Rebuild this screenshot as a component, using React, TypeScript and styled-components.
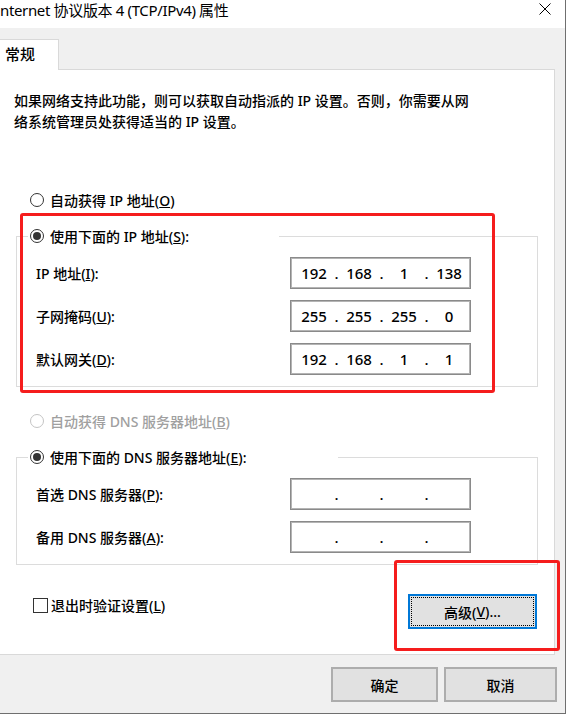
import styled, { createGlobalStyle } from "styled-components"

const GlobalStyle = createGlobalStyle`
	html, body {
		margin: 0;
		padding: 0;
		background: #ffffff;
		overflow: hidden;
	}
	* {
		box-sizing: border-box;
	}
	body {
		font-family: "Noto Sans", "Noto Sans CJK SC", sans-serif;
		color: #000;
	}
`

const ipRows = [
	{ label: "IP 地址", key: "I", value: ["192", "168", "1", "138"] },
	{ label: "子网掩码", key: "U", value: ["255", "255", "255", "0"] },
	{ label: "默认网关", key: "D", value: ["192", "168", "1", "1"] },
]

const dnsRows = [
	{ label: "首选 DNS 服务器", key: "P", value: ["", "", "", ""] },
	{ label: "备用 DNS 服务器", key: "A", value: ["", "", "", ""] },
]

const IpBox = ({ value }: { value: string[] }) => (
	<IpField>
		{value.map((oct, i) => (
			<span key={i} style={{ display: "contents" }}>
				{i > 0 && <Dot>.</Dot>}
				<Octet>{oct}</Octet>
			</span>
		))}
	</IpField>
)

const App = () => {
	return (
		<>
			<GlobalStyle />
			<Window>
				<TitleBar>
					<TitleText>nternet 协议版本 4 (TCP/IPv4) 属性</TitleText>
					<CloseIcon width="12" height="12" viewBox="0 0 12 12">
						<path d="M0.5 0.5 L11.5 11.5 M11.5 0.5 L0.5 11.5" stroke="#000" strokeWidth="1" fill="none" />
					</CloseIcon>
				</TitleBar>

				<Body>
					<TabStrip>
						<Tab>常规</Tab>
					</TabStrip>
					<Panel>
						<Desc>
							如果网络支持此功能，则可以获取自动指派的 IP 设置。否则，你需要从网<br />
							络系统管理员处获得适当的 IP 设置。
						</Desc>

						<OptionRow $top={58}>
							<Radio />
							<span>自动获得 IP 地址(<u>O</u>)</span>
						</OptionRow>

						<Group $top={16}>
							<Legend $width={251}>
								<Radio $checked />
								<span>使用下面的 IP 地址(<u>S</u>):</span>
							</Legend>
							{ipRows.map(r => (
								<FieldRow key={r.key}>
									<span>{r.label}(<u>{r.key}</u>):</span>
									<IpBox value={r.value} />
								</FieldRow>
							))}
						</Group>

						<OptionRow $top={24} $disabled>
							<Radio $disabled />
							<span>自动获得 DNS 服务器地址(<u>B</u>)</span>
						</OptionRow>

						<Group $top={16}>
							<Legend $width={310}>
								<Radio $checked />
								<span>使用下面的 DNS 服务器地址(<u>E</u>):</span>
							</Legend>
							{dnsRows.map(r => (
								<FieldRow key={r.key}>
									<span>{r.label}(<u>{r.key}</u>):</span>
									<IpBox value={r.value} />
								</FieldRow>
							))}
						</Group>

						<FooterRow>
							<CheckRow>
								<CheckBox />
								<span>退出时验证设置(<u>L</u>)</span>
							</CheckRow>
							<Button $focused $width={129}>高级(<u>V</u>)...</Button>
						</FooterRow>
					</Panel>

					<DialogButtons>
						<Button $width={107}>确定</Button>
						<Button $width={113}>取消</Button>
					</DialogButtons>
				</Body>

				<Marker style={{ left: 20, top: 213, width: 475, height: 180 }} />
				<Marker style={{ left: 394, top: 560, width: 166, height: 91 }} />
			</Window>
		</>
	)
}

const Window = styled.div`
	position: relative;
	width: 566px;
	height: 714px;
	background: #f0f0f0;
	border-right: 1px solid #6f6f6f;
	border-bottom: 1px solid #6f6f6f;
	display: flex;
	flex-direction: column;
	overflow: hidden;
	font-size: 14px;
	font-weight: 500;
`

const TitleBar = styled.div`
	height: 28px;
	flex: none;
	background: #ffffff;
	display: flex;
	align-items: flex-start;
	justify-content: space-between;
	padding-right: 14px;
`

const TitleText = styled.div`
	font-size: 15px;
	font-weight: 400;
	line-height: 20px;
	white-space: nowrap;
	letter-spacing: -0.35px;
`

const CloseIcon = styled.svg`
	margin-top: 3px;
`

const Body = styled.div`
	flex: 1;
	display: flex;
	flex-direction: column;
`

const TabStrip = styled.div`
	display: flex;
	margin-top: 11px;
	position: relative;
	z-index: 1;
`

const Tab = styled.div`
	width: 59px;
	height: 31px;
	margin-bottom: -1px;
	background: #ffffff;
	border: 1px solid #d9d9d9;
	border-left: none;
	border-bottom: none;
	padding-left: 5px;
	font-size: 15px;
	line-height: 28px;
`

const Panel = styled.div`
	width: 555px;
	height: 586px;
	flex: none;
	background: #ffffff;
	border: 1px solid #d9d9d9;
	border-left: none;
	display: flex;
	flex-direction: column;
`

const Desc = styled.p`
	margin: 20px 0 0 14px;
	line-height: 21px;
	font-size: 14px;
	white-space: nowrap;
`

const OptionRow = styled.div<{ $top: number; $disabled?: boolean }>`
	display: flex;
	align-items: center;
	gap: 6px;
	height: 20px;
	margin-top: ${p => p.$top}px;
	padding-left: 30px;
	color: ${p => (p.$disabled ? "#a0a0a0" : "#000")};
	white-space: nowrap;
`

const Radio = styled.span<{ $checked?: boolean; $disabled?: boolean }>`
	position: relative;
	width: 14px;
	height: 14px;
	flex: none;
	border-radius: 50%;
	border: 1px solid ${p => (p.$disabled ? "#c4c4c4" : "#333")};
	background: #fff;

	&::after {
		content: "";
		display: ${p => (p.$checked ? "block" : "none")};
		position: absolute;
		left: 2px;
		top: 2px;
		width: 8px;
		height: 8px;
		border-radius: 50%;
		background: #333;
	}
`

const Group = styled.fieldset<{ $top: number }>`
	margin: ${p => p.$top}px 0 0 16px;
	width: 522px;
	border: 1px solid #dcdcdc;
	padding: 11px 0 11px 19px;
	display: flex;
	flex-direction: column;
	gap: 11px;
	min-inline-size: 0;
`

const Legend = styled.legend<{ $width: number }>`
	display: flex;
	align-items: center;
	gap: 6px;
	height: 20px;
	width: ${p => p.$width}px;
	margin-left: -8px;
	padding: 0 0 0 2px;
	white-space: nowrap;
	background: #fff;
`

const FieldRow = styled.div`
	display: grid;
	grid-template-columns: 254px 181px;
	align-items: center;
	height: 32px;
	white-space: nowrap;
`

const IpField = styled.div`
	display: flex;
	align-items: center;
	height: 32px;
	border: 1px solid #8a8a8a;
	box-shadow: inset 0 0 0 1px #b4b4b4;
	padding-left: 5px;
	font-size: 15px;
`

const Octet = styled.span`
	width: 36px;
	text-align: center;
`

const Dot = styled.span`
	width: 9px;
	text-align: center;
`

const FooterRow = styled.div`
	display: flex;
	align-items: flex-start;
	justify-content: space-between;
	margin-top: 29px;
	padding-left: 33px;
	padding-right: 17px;
`

const CheckRow = styled.div`
	display: flex;
	align-items: center;
	gap: 3px;
	height: 20px;
	margin-top: 1px;
	white-space: nowrap;
`

const CheckBox = styled.span`
	width: 15px;
	height: 15px;
	border: 1px solid #333;
	background: #fff;
`

const Button = styled.div<{ $width: number; $focused?: boolean }>`
	width: ${p => p.$width}px;
	height: 35px;
	display: flex;
	align-items: center;
	justify-content: center;
	background: #e1e1e1;
	border: ${p => (p.$focused ? "2px solid #0078d7" : "2px solid #adadad")};
	outline: ${p => (p.$focused ? "1px dotted #000" : "none")};
	outline-offset: -4px;
	font-size: 14px;
	white-space: nowrap;
`

const DialogButtons = styled.div`
	display: flex;
	justify-content: flex-end;
	gap: 6px;
	margin-top: 12px;
	padding-right: 8px;
`

const Marker = styled.div`
	position: absolute;
	border: 3px solid #f51d1d;
	border-radius: 3px;
	pointer-events: none;
`

export default App
